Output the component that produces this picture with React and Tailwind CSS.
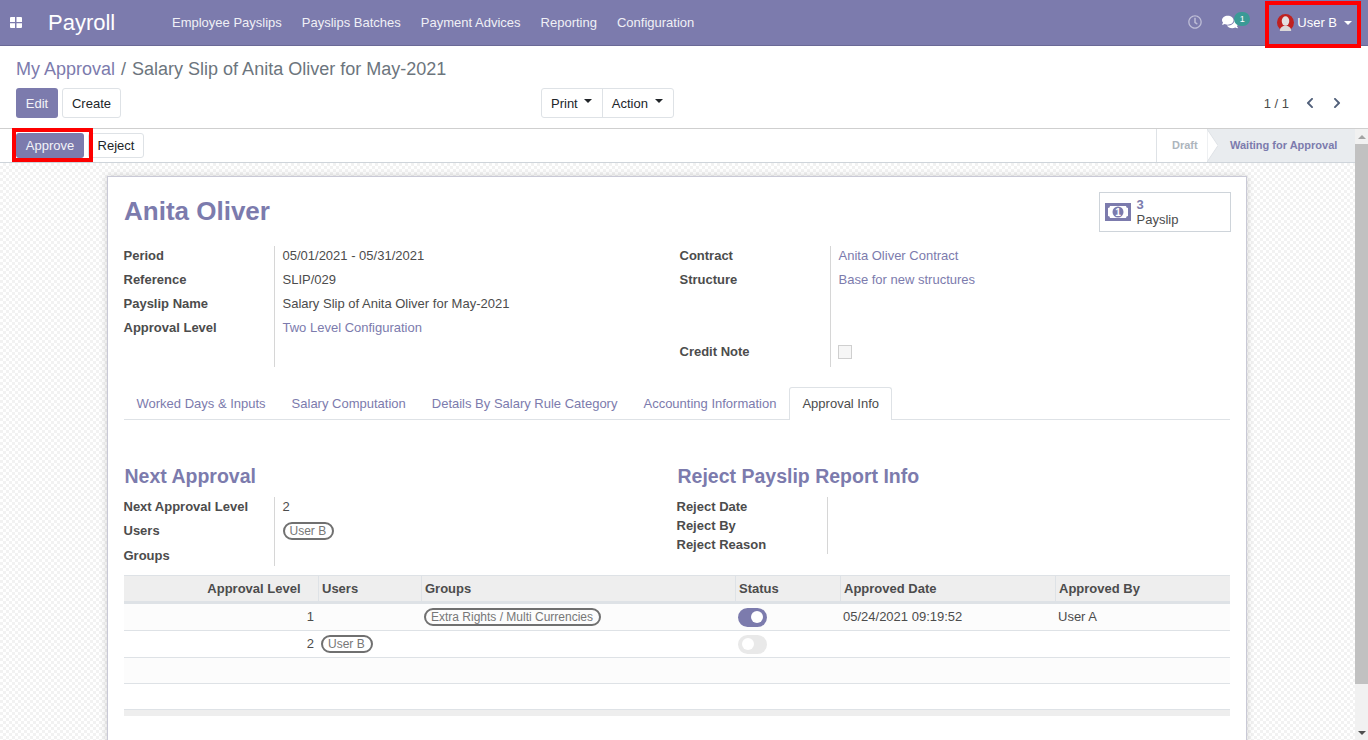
import React from "react";
import { FaChevronLeft, FaChevronRight, FaRegClock, FaComments } from "react-icons/fa";

const Caret = ({ white }) => (
  <span className={`inline-block w-0 h-0 border-x-[4px] border-t-[4px] border-x-transparent ${white ? "border-t-white" : "border-t-[#212529]"}`} />
);

const BtnCaret = () => (
  <span className="inline-block w-0 h-0 mt-[-5px] border-x-[4.500px] border-t-[4px] border-x-transparent border-t-[#212529]" />
);

const Pill = ({ children }) => (
  <span className="inline-flex items-center h-[18px] pl-[5px] pr-[6px] rounded-full border-2 border-[#707070] text-[12px] text-[#777] leading-none">{children}</span>
);

const Row = ({ h = "h-[18px] pt-[2px]", children }) => (
  <div className={`${h} flex items-center whitespace-nowrap`}>{children}</div>
);

function Group({ labels, values, rowClass = "gap-[6px]", height, rh }) {
  return (
    <div className={`flex ${height}`}>
      <div className={`w-[150px] flex flex-col font-bold ${rowClass}`}>
        {labels.map((l, i) => (
          <Row key={i} h={rh ? rh[i] : undefined}>{l}</Row>
        ))}
      </div>
      <div className={`flex-1 border-l border-[#d6d6d6] pl-2 flex flex-col ${rowClass}`}>
        {values.map((v, i) => (
          <Row key={i} h={rh ? rh[i] : undefined}>{v}</Row>
        ))}
      </div>
    </div>
  );
}

const Link = ({ children }) => <span className="text-[#7c7bad]">{children}</span>;

const cols = "grid grid-cols-[194px_103px_314px_105px_215px_175px]";

const Toggle = ({ on }) => (
  <span className={`flex items-center w-[29px] h-[19px] rounded-full ${on ? "bg-[#7c7bad] justify-end pr-[4px]" : "bg-[#e9e9e9] pl-[4px]"}`}>
    <span className="w-[12px] h-[12px] rounded-full bg-white" />
  </span>
);

const Stat = () => (
  <svg viewBox="0 0 26 18" className="w-[26px] h-[18px]">
    <path fill="#7c7bad" d="M0 0h26v18H0z" />
    <path fill="#fff" d="M5 3h16a2 2 0 0 0 2 2v8a2 2 0 0 0-2 2H5a2 2 0 0 0-2-2V5a2 2 0 0 0 2-2z" />
    <circle cx="13" cy="9" r="5.500" fill="#7c7bad" />
    <text x="13" y="12.500" textAnchor="middle" fontSize="10" fontWeight="700" fill="#fff" fontFamily="Liberation Sans, sans-serif">1</text>
  </svg>
);

export default function App() {
  return (
    <div className="relative w-[1368px] h-[740px] overflow-hidden flex flex-col bg-white text-[13px] text-[#4c4c4c] font-[family-name:'Liberation_Sans',sans-serif]">
      {/* navbar */}
      <header className="h-[46px] shrink-0 bg-[#7c7bad] border-b border-[#6a6996] flex items-center text-white">
        <svg viewBox="0 0 12 11" className="w-[12px] h-[11px] ml-[10px] mt-[-1px]">
          <path fill="#fff" d="M0 1a1 1 0 0 1 1-1h4v5H0zM6.500 0H11a1 1 0 0 1 1 1v4H6.500zM0 6.300h5v4.700H1a1 1 0 0 1-1-1zM6.500 6.300H12V10a1 1 0 0 1-1 1H6.500z" />
        </svg>
        <span className="ml-[26px] text-[22px] w-[114px]">Payroll</span>
        <nav className="flex text-[#f0f0f6]">
          {["Employee Payslips", "Payslips Batches", "Payment Advices", "Reporting", "Configuration"].map((m) => (
            <span key={m} className="px-[10px]">{m}</span>
          ))}
        </nav>
        <div className="ml-auto flex items-center">
          <FaRegClock className="w-[14px] h-[14px] opacity-50 mt-[-2px]" />
          <span className="relative ml-[20px] mt-[-2px] w-[16px] h-[16px] flex items-center">
            <FaComments className="w-[16px] h-[16px]" />
            <span className="absolute left-[12px] top-[-2px] w-[16px] h-[14px] rounded-full bg-[#3a9a96] text-[9px] leading-[14px] text-center">1</span>
          </span>
          <svg viewBox="0 0 18 18" className="ml-[39px] w-[17px] h-[17px]">
            <circle cx="9" cy="9" r="9" fill="#c0211f" />
            <ellipse cx="9" cy="7.500" rx="4" ry="5" fill="#e4e0e0" />
            <path fill="#dcd8d8" d="M3 18c0-4 3-5.500 6-5.500s6 1.500 6 5.500z" />
          </svg>
          <span className="ml-[3px]">User B</span>
          <span className="ml-[7px] mr-[16px] flex"><Caret white /></span>
        </div>
      </header>

      {/* control panel */}
      <section className="h-[83px] shrink-0 border-b border-[#cfcfcf] px-4 pt-[11px]">
        <div className="h-[24px] flex items-center text-[18px] text-[#6c757d] whitespace-nowrap">
          <span className="text-[#7c7bad]">My Approval</span>
          <span className="mx-[6px]">/</span>
          <span>Salary Slip of Anita Oliver for May-2021</span>
        </div>
        <div className="mt-[7px] h-[30px] flex items-stretch">
          <div className="w-[525px] flex gap-1">
            <button className="w-[42px] pt-px rounded-[3px] bg-[#7c7bad] text-[#f3f3f8]">Edit</button>
            <button className="w-[59px] pt-px rounded-[3px] border border-[#dee2e6] bg-white text-[#212529]">Create</button>
          </div>
          <div className="flex pt-px rounded-[3px] border border-[#dee2e6] text-[#212529]">
            <span className="flex items-center gap-[6px] pl-[9px] pr-[10px] -mt-px border-r border-[#dee2e6] whitespace-nowrap"><span className="pt-[2px]">Print</span> <BtnCaret /></span>
            <span className="flex items-center gap-[7px] pl-[9px] pr-[10px] -mt-px whitespace-nowrap"><span className="pt-[2px]">Action</span> <BtnCaret /></span>
          </div>
          <div className="ml-auto flex items-center text-[#4c4c4c]">
            <span className="pt-[2px]">1 / 1</span>
            <FaChevronLeft className="ml-[16px] w-[10px] h-[12px] text-[#51607a]" />
            <FaChevronRight className="ml-[17px] mr-[10px] w-[10px] h-[12px] text-[#51607a]" />
          </div>
        </div>
      </section>

      <div className="flex-1 flex min-h-0">
        <main className="w-[1355px] flex flex-col min-h-0">
          {/* status bar */}
          <div className="h-[34px] shrink-0 border-b border-[#ced4da] flex justify-between">
            <div className="pl-4 pt-1 flex gap-1 items-start">
              <button className="w-[68px] h-[25px] rounded-[3px] bg-[#7c7bad] text-[#f3f3f8]">Approve</button>
              <button className="w-[56px] h-[25px] rounded-[3px] border border-[#dee2e6] bg-white text-[#212529]">Reject</button>
            </div>
            <div className="flex text-[11px] font-bold">
              <span className="w-[51px] border-l border-[#dee2e6] pl-[15px] flex items-center text-[#adb5bd]">Draft</span>
              <div className="w-[148px] bg-[#e9ecef] flex items-stretch text-[#7c7bad]">
                <svg viewBox="0 0 11 33" preserveAspectRatio="none" className="w-[11px] h-full">
                  <path d="M0 0L11 16.500L0 33z" fill="#fff" stroke="#dee2e6" strokeWidth="1" />
                </svg>
                <span className="pl-[12px] flex items-center whitespace-nowrap">Waiting for Approval</span>
              </div>
            </div>
          </div>

          {/* sheet area */}
          <div className="flex-1 min-h-0 overflow-hidden pt-[13px] pl-[107px] bg-[repeating-conic-gradient(#f2f2f2_0_25%,#ffffff_0_50%)] bg-[length:6px_6px]">
            <div className="relative w-[1140px] h-[600px] bg-white border border-[#c9c9d6] shadow-[0_0_7px_rgba(0,0,0,0.18)] px-4 pt-[18px]">
              <button className="absolute right-[15px] top-[15px] w-[132px] h-[40px] border border-[#ced4da] bg-white flex items-center pl-[5px] text-left">
                <Stat />
                <span className="ml-[5.500px] flex flex-col leading-[15px]">
                  <span className="font-bold text-[#7c7bad]">3</span>
                  <span>Payslip</span>
                </span>
              </button>

              <h1 className="h-[32px] leading-[33px] text-[26px] font-bold text-[#7c7bad]">Anita Oliver</h1>

              <div className="mt-[19px] ml-[-0.500px] flex">
                <div className="w-[556px]">
                  <Group
                    height="h-[121px]"
                    labels={["Period", "Reference", "Payslip Name", "Approval Level"]}
                    values={["05/01/2021 - 05/31/2021", "SLIP/029", "Salary Slip of Anita Oliver for May-2021", <Link>Two Level Configuration</Link>]}
                  />
                </div>
                <div className="flex-1">
                  <Group
                    height="h-[121px]"
                    labels={["Contract", "Structure", "", "", "Credit Note"]}
                    values={[
                      <Link>Anita Oliver Contract</Link>,
                      <Link>Base for new structures</Link>,
                      "",
                      "",
                      <span className="ml-[-1px] w-[14px] h-[14px] border border-[#cfcfcf] bg-[#f6f6f6]" />,
                    ]}
                  />
                </div>
              </div>

              <div className="mt-[20px] h-[33px] flex border-b border-[#dee2e6]">
                <div className="flex ml-[-0.500px] pt-px">
                  {["Worked Days & Inputs", "Salary Computation", "Details By Salary Rule Category", "Accounting Information"].map((t) => (
                    <span key={t} className="px-[13px] flex items-center text-[#7c7bad] whitespace-nowrap">{t}</span>
                  ))}
                </div>
                <span className="h-[33px] px-[12px] flex items-center border border-b-0 border-[#dee2e6] rounded-t-[3px] bg-white text-[#4c4c4c] whitespace-nowrap">Approval Info</span>
              </div>

              <div className="mt-[44px] ml-[-0.500px] flex">
                <div className="w-[553px]">
                  <h2 className="ml-px h-[24px] leading-[24px] text-[19.500px] font-bold text-[#7c7bad]">Next Approval</h2>
                  <div className="mt-[9px]">
                    <Group
                      height="h-[69px]"
                      rowClass=""
                      rh={["h-[18px] pt-[2px] mb-[6px]", "h-[18px] pt-[2px] mb-[7px]", "h-[18px] pt-[2px]"]}
                      labels={["Next Approval Level", "Users", "Groups"]}
                      values={["2", <Pill>User B</Pill>, ""]}
                    />
                  </div>
                </div>
                <div className="flex-1">
                  <h2 className="ml-px h-[24px] leading-[24px] text-[19.500px] font-bold text-[#7c7bad]">Reject Payslip Report Info</h2>
                  <div className="mt-[9px]">
                    <Group
                      height="h-[57px]"
                      rowClass=""
                      rh={["h-[19px]", "h-[19px]", "h-[19px]"]}
                      labels={["Reject Date", "Reject By", "Reject Reason"]}
                      values={["", "", ""]}
                    />
                  </div>
                </div>
              </div>

              <div className="mt-[9px]">
                <div className={`${cols} h-[29px] bg-[#eeeeee] border-t border-[#dee2e6] border-b-[3px] border-b-[#dee2e6] font-bold items-stretch`}>
                  <span className="flex items-center justify-end pr-[17.500px]">Approval Level</span>
                  {["Users", "Groups", "Status", "Approved Date", "Approved By"].map((h) => (
                    <span key={h} className="flex items-center border-l border-[#dee2e6] pl-[3px]">{h}</span>
                  ))}
                </div>
                <div className={`${cols} h-[27px] bg-[#fcfcfc] border-b border-[#dee2e6] items-center`}>
                  <span className="text-right pr-1">1</span>
                  <span />
                  <span className="pl-[3px]"><Pill>Extra Rights / Multi Currencies</Pill></span>
                  <span className="pl-[3px]"><Toggle on /></span>
                  <span className="pl-[3px]">05/24/2021 09:19:52</span>
                  <span className="pl-[3px]">User A</span>
                </div>
                <div className={`${cols} h-[27px] bg-white border-b border-[#dee2e6] items-center`}>
                  <span className="text-right pr-1">2</span>
                  <span className="pl-[3px]"><Pill>User B</Pill></span>
                  <span />
                  <span className="pl-[3px]"><Toggle /></span>
                </div>
                <div className="h-[26px] bg-[#fcfcfc] border-b border-[#dee2e6]" />
                <div className="h-[26px] bg-white border-b border-[#dee2e6]" />
                <div className="h-[6px] bg-[#eeeeee]" />
              </div>
            </div>
          </div>
        </main>

        {/* scrollbar */}
        <div className="w-[13px] bg-[#f1f1f1] flex flex-col items-stretch">
          <div className="h-[15px] flex items-center justify-center">
            <span className="w-0 h-0 border-x-[4px] border-b-[4px] border-x-transparent border-b-[#a3a3a3]" />
          </div>
          <div className="h-[540px] bg-[#c1c1c1]" />
          <div className="mt-auto h-[15px] flex items-center justify-center">
            <span className="w-0 h-0 border-x-[4px] border-t-[4px] border-x-transparent border-t-[#505050]" />
          </div>
        </div>
      </div>

      {/* red annotation boxes */}
      <div className="absolute left-[12px] top-[128px] w-[81px] h-[34px] border-4 border-[#fe0000]" />
      <div className="absolute left-[1265px] top-[1px] w-[96px] h-[47px] border-4 border-[#fe0000]" />
    </div>
  );
}
